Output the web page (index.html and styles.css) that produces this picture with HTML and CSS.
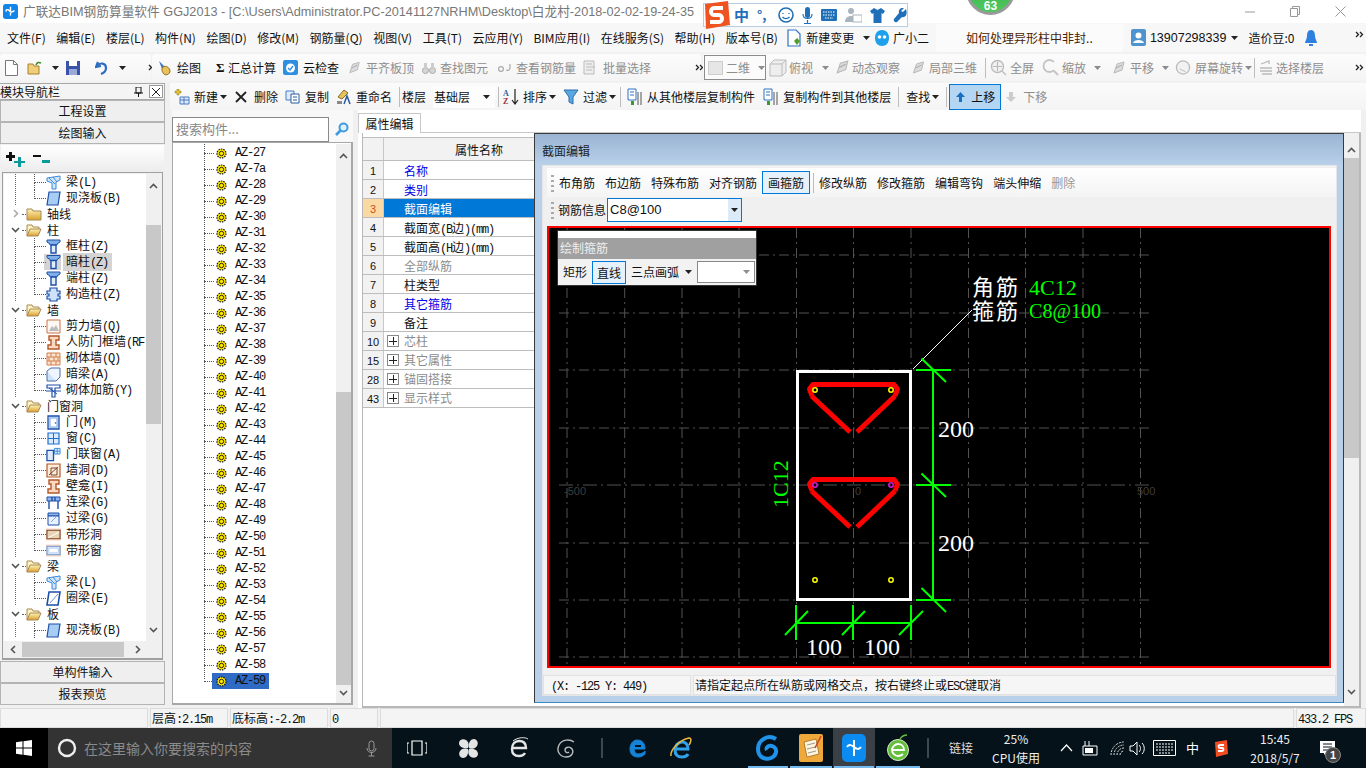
FILE: index.html
```html
<!DOCTYPE html>
<html lang="zh">
<head>
<meta charset="utf-8">
<title>广联达BIM钢筋算量软件 GGJ2013</title>
<link rel="stylesheet" href="styles.css">
</head>
<body>
<svg class="defs" width="0" height="0" aria-hidden="true">
  <defs>
    <linearGradient id="fo" x1="0" y1="0" x2="0" y2="1"><stop offset="0" stop-color="#fff2b8"/><stop offset="1" stop-color="#d9a02c"/></linearGradient>
    <symbol id="folder" viewBox="0 0 16 14"><path d="M1 2h5l1 2h8v9H1z" fill="url(#fo)" stroke="#a58a55"/></symbol>
    <symbol id="folderopen" viewBox="0 0 16 14"><path d="M1 13V2h5l1 2h6v2" fill="#fff3c4" stroke="#a58a55"/><path d="M1 13l3-7h11l-3 7z" fill="url(#fo)" stroke="#a58a55"/></symbol>
    <symbol id="col" viewBox="0 0 15 15"><path d="M1 1h13v2l-3 2v1H4V5L1 3z" fill="#7fb0ea" stroke="#1e4fa8"/><path d="M5 6h5v8H5z" fill="#dfeeff" stroke="#1e4fa8" stroke-width="1.4"/></symbol>
    <symbol id="cons" viewBox="0 0 15 15"><path d="M4 1h7v3h3v3h-2v2h2v3h-3v2H4v-2H1V9h2V7H1V4h3z" fill="#cfe2fb" stroke="#1e4fa8" stroke-width="1.2"/></symbol>
    <symbol id="beam" viewBox="0 0 15 15"><path d="M1 3l13-2v4l-4 2v7H6V8L1 6z" fill="#cfe6fb" stroke="#3c87d8"/><path d="M3 3l6 6M7 2l4 5" stroke="#3c87d8"/></symbol>
    <symbol id="slab" viewBox="0 0 15 15"><path d="M3 1h11l-2 13H1z" fill="#a8cdf5" stroke="#1c4fa8" stroke-width="1.2"/></symbol>
    <symbol id="ring" viewBox="0 0 15 15"><path d="M3 1h11l-2 13H1z" fill="#fff" stroke="#1c4fa8" stroke-width="1.6"/><path d="M4 12L12 3" stroke="#5d95dd"/></symbol>
    <symbol id="shear" viewBox="0 0 15 15"><path d="M1 1h13v13H1z" fill="#fff8f2" stroke="#c8744a"/><path d="M3 12l3-5 2 2 2-3 3 6z" fill="#bbb"/></symbol>
    <symbol id="civil" viewBox="0 0 15 15"><path d="M3 1h10v4h-3v5h3v4H2v-4h3V5H3z" fill="#fbd9c0" stroke="#b4592a" stroke-width="1.4"/></symbol>
    <symbol id="brick" viewBox="0 0 15 15"><path d="M1 2h13v12H1z" fill="#fbe3cd" stroke="#d08050"/><path d="M1 6h13M1 10h13M5 2v4M10 2v4M3 6v4M8 6v4M12 6v4M5 10v4M10 10v4" stroke="#d08050"/></symbol>
    <symbol id="abeam" viewBox="0 0 15 15"><path d="M1 4h9v10H1z" fill="#cfe3fa" stroke="#466fa8"/><path d="M1 4l4-3h9v9l-4 4" fill="#eef5ff" stroke="#466fa8"/></symbol>
    <symbol id="rein" viewBox="0 0 15 15"><path d="M1 2h13v3H9v9H6V5H1z" fill="#fff" stroke="#1e4fa8" stroke-width="1.2"/><path d="M0 8h15M3 5l8 6" stroke="#1e4fa8"/></symbol>
    <symbol id="door" viewBox="0 0 15 15"><path d="M2 1h11v13H2z" fill="#cfe1fb" stroke="#1e4fa8" stroke-width="1.3"/><path d="M4 3h7v9H4z" fill="#fff" stroke="#7fa8df"/><circle cx="9.500" cy="8" r=".8" fill="#1e4fa8"/></symbol>
    <symbol id="win" viewBox="0 0 15 15"><path d="M2 2h11v11H2z" fill="#dcecff" stroke="#1e6fd0" stroke-width="1.2"/><path d="M7.500 2v11M2 7.500h11" stroke="#1e6fd0"/></symbol>
    <symbol id="doorwin" viewBox="0 0 16 15"><path d="M1 3h7v11H1z" fill="#dfeafc" stroke="#1e4fa8" stroke-width="1.4"/><path d="M9 1h6v6H9z" fill="#dcecff" stroke="#3c87d8"/><path d="M12 1v6M9 4h6" stroke="#3c87d8"/></symbol>
    <symbol id="hole" viewBox="0 0 15 15"><path d="M1 1h13v13H1z" fill="#fdecdc" stroke="#b4592a" stroke-width="1.2"/><path d="M3 12L12 4M5 5h6v7H5z" stroke="#7a4424" fill="none"/></symbol>
    <symbol id="lbeam" viewBox="0 0 15 15"><path d="M1 2h13v4H1z" fill="#8fb8ee" stroke="#1e4fa8"/><path d="M3 6v8M12 6v8M6 2v4M9 2v4" stroke="#1e4fa8" stroke-width="1.4"/></symbol>
    <symbol id="gbeam" viewBox="0 0 15 15"><path d="M2 2h11v3H2z" fill="#8fb8ee" stroke="#1e4fa8"/><path d="M2 5h11v9H2z" fill="#e8f1fd" stroke="#1e4fa8"/><path d="M5 11l5-5" stroke="#7fa8df"/></symbol>
    <symbol id="bandh" viewBox="0 0 16 15"><path d="M0 1h16v13H0z" fill="#fcdccb"/><path d="M1 3h14v9H1z" fill="#e9d2b6" stroke="#7a4424" stroke-width="1.2"/><path d="M2 11L14 5" stroke="#fff"/></symbol>
    <symbol id="bandw" viewBox="0 0 16 15"><path d="M0 1h16v13H0z" fill="#fcdccb"/><path d="M1 3h14v9H1z" fill="#dceafc" stroke="#6f94d0" stroke-width="1.2"/><path d="M3 5h10v5H3z" fill="#fff" stroke="#b7cdee"/></symbol>
    <symbol id="gem" viewBox="0 0 11 11"><circle cx="5.500" cy="5.500" r="4.500" fill="#ffe800" stroke="#111" stroke-width="1.200" stroke-dasharray="1.500 1"/><circle cx="5.500" cy="5.500" r="2.200" fill="#ffe800" stroke="#111" stroke-width=".9"/></symbol>
    <symbol id="up" viewBox="0 0 9 6"><path d="M1 5l3.500-3.500L8 5" fill="none" stroke="#555" stroke-width="1.600"/></symbol>
    <symbol id="down" viewBox="0 0 9 6"><path d="M1 1l3.500 3.500L8 1" fill="none" stroke="#555" stroke-width="1.600"/></symbol>
    <symbol id="tri" viewBox="0 0 7 4"><path d="M0 0h7L3.500 4z" fill="#222"/></symbol>
    <symbol id="more" viewBox="0 0 9 7"><path d="M1 1l2.500 2.500L1 6M5 1l2.500 2.500L5 6" fill="none" stroke="#222" stroke-width="1.300"/></symbol>
    <symbol id="gray" viewBox="0 0 16 16"><path d="M3 13l3-9 7-2-2 8z" fill="#dcdcdc" stroke="#b9b9b9"/><path d="M5 8l6-3" stroke="#aaa"/></symbol>
    <symbol id="grip" viewBox="0 0 3 18"><path d="M0 1h3v2H0zM0 6h3v2H0zM0 11h3v2H0zM0 16h3v2H0z" fill="#aaa"/></symbol>
  </defs>
</svg>

<header class="titlebar">
  <svg class="appicon" viewBox="0 0 17 17" width="15" height="15"><rect width="17" height="17" rx="3" fill="#1185e8"/><path d="M8.500 3v10M4 8.500c-2-2 2-3 3-1s4 2 6 0" fill="none" stroke="#fff" stroke-width="1.600"/></svg>
  <span class="apptitle">广联达BIM钢筋算量软件 GGJ2013 - [C:\Users\Administrator.PC-20141127NRHM\Desktop\白龙村-2018-02-02-19-24-35</span>
  <div class="winbtns">
    <svg width="10" height="10" viewBox="0 0 10 10"><path d="M0 5h10" stroke="#999"/></svg>
    <svg width="10" height="11" viewBox="0 0 10 11"><path d="M.5 2.500h7v8h-7zM2.500 2.500v-2h7v8h-2" fill="none" stroke="#999"/></svg>
    <svg width="11" height="11" viewBox="0 0 11 11"><path d="M.5.500l10 10M10.500.500l-10 10" stroke="#999"/></svg>
  </div>
</header>

<nav class="menubar">
  <span>文件(F)</span><span>编辑(E)</span><span>楼层(L)</span><span>构件(N)</span><span>绘图(D)</span><span>修改(M)</span><span>钢筋量(Q)</span><span>视图(V)</span><span>工具(T)</span><span>云应用(Y)</span><span>BIM应用(I)</span><span>在线服务(S)</span><span>帮助(H)</span><span>版本号(B)</span>
  <span class="mitem"><svg width="14" height="18" viewBox="0 0 14 18"><path d="M1 1h8l4 4v12H1z" fill="#fff" stroke="#2f72c4" stroke-width="1.200"/><path d="M7 12l3-3 3 3-3 4z" fill="#4f9e2a"/></svg>新建变更<svg class="tri" width="7" height="4"><use href="#tri"/></svg></span>
  <span class="mitem xiao"><svg width="16" height="18" viewBox="0 0 16 18"><path d="M8 1c5 0 7 4 7 8 0 5-3 8-7 8s-7-3-7-8c0-4 2-8 7-8z" fill="#1fa0ea"/><circle cx="5.500" cy="8" r="1.800" fill="#fff"/><circle cx="10.500" cy="8" r="1.800" fill="#fff"/></svg>广小二</span>
  <div class="qbox">如何处理异形柱中非封..</div>
  <div class="acct">
    <svg width="15" height="17" viewBox="0 0 15 17"><rect width="15" height="17" rx="2" fill="#4e93cf"/><circle cx="7.500" cy="6.500" r="3" fill="#fff"/><path d="M2 14c1-4 10-4 11 0z" fill="#fff"/></svg>
    <span class="phone">13907298339</span><svg class="tri" width="7" height="4"><use href="#tri"/></svg>
    <span class="beans">造价豆:0</span>
    <svg width="12" height="16" viewBox="0 0 12 16"><path d="M6 0c3 0 4 3 4 6 0 3 2 5 2 7H0c0-2 2-4 2-7 0-3 1-6 4-6z" fill="#2d7fe0"/><path d="M4 14h4v2H4z" fill="#2d7fe0"/></svg>
  </div>
  <svg class="more-r" width="9" height="7"><use href="#more"/></svg>
</nav>

<div class="toolbar">
  <div class="tpanel tp1">
    <svg width="13" height="16" viewBox="0 0 13 16"><path d="M.5.500h8l4 4v11H.5z" fill="#fff" stroke="#777"/><path d="M8.500.500v4h4" fill="none" stroke="#777"/></svg>
    <svg class="ml9" width="16" height="14" viewBox="0 0 16 14"><path d="M1 13V3h5l1 2h5v8z" fill="#f1cf7a" stroke="#a5802f"/><path d="M9 4c1-3 3-3 5-2" fill="none" stroke="#3d8a2d" stroke-width="1.500"/></svg>
    <svg class="tri ml9" width="7" height="4"><use href="#tri"/></svg>
    <svg class="ml7" width="14" height="14" viewBox="0 0 14 14"><path d="M0 0h14v14H0z" fill="#3a53a8"/><path d="M3 0h8v5H3z" fill="#fff"/><path d="M3 8h8v6H3z" fill="#9aa9d8"/></svg>
    <i class="sep ml7"></i>
    <svg class="ml8" width="13" height="15" viewBox="0 0 13 15"><path d="M3 2L1 7l5-1M2 6c3-4 9-3 9 2 0 3-2 5-5 6" fill="none" stroke="#2d6cc0" stroke-width="2.200"/></svg>
    <svg class="tri ml11" width="7" height="4"><use href="#tri"/></svg>
    <svg class="ml22" width="9" height="7"><use href="#more"/></svg>
  </div>
  <div class="tpanel tp2">
    <svg width="17" height="18" viewBox="0 0 17 18"><path d="M2 2l5 5-2 3z" fill="#3b78c8"/><path d="M6 8c3-2 7 1 7 4s-4 5-6 3-3-5-1-7z" fill="#e9c35a" stroke="#8a6a20"/></svg><span class="ml3">绘图</span>
    <b class="sigma">Σ</b><span class="ml4">汇总计算</span>
    <svg class="ml7" width="15" height="15" viewBox="0 0 15 15"><rect width="15" height="15" rx="2" fill="#2e8ee0"/><circle cx="7.500" cy="8" r="4.500" fill="#fff"/><path d="M5 8l2 2 3-4" fill="none" stroke="#2e8ee0" stroke-width="1.400"/></svg><span class="ml5">云检查</span>
    <span class="dim ml8"><svg width="15" height="16"><use href="#gray"/></svg><span class="ml4">平齐板顶</span></span>
    <span class="dim ml8"><svg width="14" height="14" viewBox="0 0 14 14"><circle cx="3.500" cy="9.500" r="3" fill="#d5d5d5" stroke="#aaa"/><circle cx="10.500" cy="9.500" r="3" fill="#d5d5d5" stroke="#aaa"/><path d="M2 2h3v6H2zM9 2h3v6H9z" fill="#ccc"/></svg><span class="ml4">查找图元</span></span>
    <span class="dim ml10"><svg width="13" height="10" viewBox="0 0 13 10"><circle cx="3" cy="6" r="2.400" fill="none" stroke="#aaa" stroke-width="1.200"/><path d="M8 7c2 1 4 0 4-2V1" fill="none" stroke="#aaa" stroke-width="1.200"/></svg><span class="ml5">查看钢筋量</span></span>
    <span class="dim ml7"><svg width="14" height="15" viewBox="0 0 14 15"><path d="M1 1h10v13H1z" fill="#eee" stroke="#bbb"/><path d="M3 4h6M3 7h9M3 10h6" stroke="#bbb"/></svg><span class="ml6">批量选择</span></span>
    <svg class="ml44" width="9" height="7"><use href="#more"/></svg>
  </div>
  <div class="tpanel tp3">
    <div class="combo2d"><svg width="15" height="14" viewBox="0 0 15 14"><path d="M.5.500h14v13H.5z" fill="#e6e6e6" stroke="#ccc"/></svg><span class="ml3">二维</span><svg class="tri tri-g ml8" width="7" height="4"><use href="#tri"/></svg></div>
    <span class="dim ml3"><svg width="18" height="18" viewBox="0 0 18 18"><path d="M1 5l4-4h12v12l-4 4H1zM1 5h12v12M13 5l4-4" fill="#eee" stroke="#bbb"/></svg><span class="ml2">俯视</span></span>
    <svg class="tri tri-g ml9" width="7" height="4"><use href="#tri"/></svg>
    <span class="dim ml4"><svg width="19" height="17"><use href="#gray"/></svg><span class="ml0">动态观察</span></span>
    <span class="dim ml10"><svg width="17" height="16"><use href="#gray"/></svg><span class="ml2">局部三维</span></span>
    <i class="sep ml8"></i>
    <span class="dim ml4"><svg width="17" height="17" viewBox="0 0 17 17"><circle cx="7.500" cy="7.500" r="6" fill="#f2f2f2" stroke="#bbb" stroke-width="1.400"/><path d="M7.500 3v9M3 7.500h9M12 12l4 4" stroke="#bbb" stroke-width="1.200"/></svg><span class="ml3">全屏</span></span>
    <span class="dim ml8"><svg width="17" height="17" viewBox="0 0 17 17"><path d="M12 3A6 6 0 1 0 12 11M12 12l4 4" fill="none" stroke="#c4c4c4" stroke-width="1.800"/></svg><span class="ml3">缩放</span></span>
    <svg class="tri tri-g ml8" width="7" height="4"><use href="#tri"/></svg>
    <span class="dim ml10"><svg width="16" height="18"><use href="#gray"/></svg><span class="ml3">平移</span></span>
    <svg class="tri tri-g ml8" width="7" height="4"><use href="#tri"/></svg>
    <span class="dim ml6"><svg width="16" height="17" viewBox="0 0 17 17"><circle cx="8.500" cy="8.500" r="7" fill="#f2f2f2" stroke="#bbb" stroke-width="1.400"/><path d="M5 10l6 3" stroke="#bbb"/></svg><span class="ml4">屏幕旋转</span></span>
    <svg class="tri tri-g ml2" width="7" height="4"><use href="#tri"/></svg>
    <i class="sep ml2"></i>
    <span class="dim ml4"><svg width="14" height="15" viewBox="0 0 14 15"><path d="M2 4l8-3v3M1 8h12M1 11h12M3 14h10" fill="none" stroke="#bbb" stroke-width="1.300"/></svg><span class="ml3">选择楼层</span></span>
    <svg class="ml31" width="9" height="7"><use href="#more"/></svg>
  </div>
</div>

<main class="work">
  <aside class="nav">
    <div class="navhead"><span>模块导航栏</span><svg class="pin" width="9" height="10" viewBox="0 0 9 10"><path d="M2 0h5v6H2zM0 6h9M4.500 6v4" fill="none" stroke="#111"/></svg><span class="navclose"><svg width="8" height="8" viewBox="0 0 8 8"><path d="M0 0l8 8M8 0L0 8" stroke="#222"/></svg></span></div>
    <div class="navbtn">工程设置</div>
    <div class="navbtn">绘图输入</div>
    <div class="treetool">
      <svg width="20" height="16" viewBox="0 0 20 16"><path d="M3 1h3v3h3v3H6v3H3V7H0V4h3z" fill="#111"/><path d="M12 6h3v4h4v2h-4v4h-3v-4H8v-2h4z" fill="#0a9a9a"/></svg>
      <svg class="ml7" width="17" height="10" viewBox="0 0 17 10"><path d="M0 1h8v2H0z" fill="#111"/><path d="M9 6h8v3H9z" fill="#0a9a9a"/></svg>
    </div>
    <div class="treebox">
      <div class="treeclip">
        <ul class="tree">
          <li class="t1 cont"><svg width="15" height="15"><use href="#beam"/></svg><span>梁<em>(L)</em></span></li>
          <li class="t1 cont last"><svg width="15" height="15"><use href="#slab"/></svg><span>现浇板<em>(B)</em></span></li>
          <li class="t0"><svg class="chev" width="6" height="9" viewBox="0 0 6 9"><path d="M1 1l3.500 3.500L1 8" fill="none" stroke="#aaa" stroke-width="1.600"/></svg><svg width="16" height="14"><use href="#folder"/></svg><span>轴线</span></li>
          <li class="t0"><svg class="chev" width="9" height="6"><use href="#down"/></svg><svg width="16" height="14"><use href="#folderopen"/></svg><span>柱</span></li>
          <li class="t1 cont"><svg width="15" height="15"><use href="#col"/></svg><span>框柱<em>(Z)</em></span></li>
          <li class="t1 cont sel"><svg width="15" height="15"><use href="#col"/></svg><span>暗柱<em>(Z)</em></span></li>
          <li class="t1 cont"><svg width="15" height="15"><use href="#col"/></svg><span>端柱<em>(Z)</em></span></li>
          <li class="t1 cont last"><svg width="15" height="15"><use href="#cons"/></svg><span>构造柱<em>(Z)</em></span></li>
          <li class="t0"><svg class="chev" width="9" height="6"><use href="#down"/></svg><svg width="16" height="14"><use href="#folderopen"/></svg><span>墙</span></li>
          <li class="t1 cont"><svg width="15" height="15"><use href="#shear"/></svg><span>剪力墙<em>(Q)</em></span></li>
          <li class="t1 cont"><svg width="15" height="15"><use href="#civil"/></svg><span>人防门框墙<em>(RF</em></span></li>
          <li class="t1 cont"><svg width="15" height="15"><use href="#brick"/></svg><span>砌体墙<em>(Q)</em></span></li>
          <li class="t1 cont"><svg width="15" height="15"><use href="#abeam"/></svg><span>暗梁<em>(A)</em></span></li>
          <li class="t1 cont last"><svg width="15" height="15"><use href="#rein"/></svg><span>砌体加筋<em>(Y)</em></span></li>
          <li class="t0"><svg class="chev" width="9" height="6"><use href="#down"/></svg><svg width="16" height="14"><use href="#folderopen"/></svg><span>门窗洞</span></li>
          <li class="t1 cont"><svg width="15" height="15"><use href="#door"/></svg><span>门<em>(M)</em></span></li>
          <li class="t1 cont"><svg width="15" height="15"><use href="#win"/></svg><span>窗<em>(C)</em></span></li>
          <li class="t1 cont"><svg width="15" height="15"><use href="#doorwin"/></svg><span>门联窗<em>(A)</em></span></li>
          <li class="t1 cont"><svg width="15" height="15"><use href="#hole"/></svg><span>墙洞<em>(D)</em></span></li>
          <li class="t1 cont"><svg width="15" height="15"><use href="#civil"/></svg><span>壁龛<em>(I)</em></span></li>
          <li class="t1 cont"><svg width="15" height="15"><use href="#lbeam"/></svg><span>连梁<em>(G)</em></span></li>
          <li class="t1 cont"><svg width="15" height="15"><use href="#gbeam"/></svg><span>过梁<em>(G)</em></span></li>
          <li class="t1 cont"><svg width="15" height="15"><use href="#bandh"/></svg><span>带形洞</span></li>
          <li class="t1 cont last"><svg width="15" height="15"><use href="#bandw"/></svg><span>带形窗</span></li>
          <li class="t0"><svg class="chev" width="9" height="6"><use href="#down"/></svg><svg width="16" height="14"><use href="#folderopen"/></svg><span>梁</span></li>
          <li class="t1 cont"><svg width="15" height="15"><use href="#beam"/></svg><span>梁<em>(L)</em></span></li>
          <li class="t1 cont last"><svg width="15" height="15"><use href="#ring"/></svg><span>圈梁<em>(E)</em></span></li>
          <li class="t0"><svg class="chev" width="9" height="6"><use href="#down"/></svg><svg width="16" height="14"><use href="#folderopen"/></svg><span>板</span></li>
          <li class="t1 cont"><svg width="15" height="15"><use href="#slab"/></svg><span>现浇板<em>(B)</em></span></li>
        </ul>
        <div class="vscroll tree-vs">
          <svg width="9" height="6"><use href="#up"/></svg>
          <div class="vtrack"><i class="thumb"></i></div>
          <svg width="9" height="6"><use href="#down"/></svg>
        </div>
      </div>
      <div class="hscroll">
        <svg width="6" height="9" viewBox="0 0 6 9"><path d="M5 1L1.500 4.500 5 8" fill="none" stroke="#555" stroke-width="1.600"/></svg>
        <i class="hthumb"></i>
        <svg width="6" height="9" viewBox="0 0 6 9"><path d="M1 1l3.500 3.500L1 8" fill="none" stroke="#555" stroke-width="1.600"/></svg>
      </div>
    </div>
    <div class="navbtn bt">单构件输入</div>
    <div class="navbtn">报表预览</div>
  </aside>

  <div class="rightcol">
    <div class="tb3">
      <svg width="16" height="16" viewBox="0 0 16 16"><path d="M3 0h2v2h2v2H5v2H3V4H1V2h2z" fill="#e8c22a" stroke="#8a7a20" stroke-width=".5"/><path d="M6 8h9v7H6z" fill="#dfeafc" stroke="#4a7cc0"/><path d="M6 11h9M10 8v7" stroke="#4a7cc0"/></svg>
      <span class="ml4">新建</span><svg class="tri ml2" width="7" height="4"><use href="#tri"/></svg>
      <svg class="ml8" width="12" height="12" viewBox="0 0 12 12"><path d="M1 1l10 10M11 1L1 11" stroke="#222" stroke-width="1.800"/></svg><span class="ml7">删除</span>
      <svg class="ml7" width="15" height="14" viewBox="0 0 15 14"><path d="M1 1h8v9H1z" fill="#dfeafc" stroke="#4a7cc0"/><path d="M6 4h8v9H6z" fill="#fff" stroke="#2a5ca0"/><path d="M8 7h4M8 10h4" stroke="#2a5ca0"/></svg><span class="ml5">复制</span>
      <svg class="ml7" width="16" height="16" viewBox="0 0 16 16"><path d="M2 8l6-7 4 3-6 6z" fill="#e8c25a" stroke="#8a6a20"/><path d="M8 15l3-8 3 8" fill="none" stroke="#2a5ca0" stroke-width="1.500"/><path d="M1 12h5v3H1z" fill="#888"/></svg><span class="ml4">重命名</span>
      <i class="sep s7"></i><span class="ml2">楼层</span>
      <div class="floorsel"><span>基础层</span><svg class="tri" width="7" height="4"><use href="#tri"/></svg></div>
      <i class="sep s3"></i>
      <svg class="ml4" width="16" height="17" viewBox="0 0 16 17"><path d="M12 1v14M9 12l3 4 3-4" fill="none" stroke="#222" stroke-width="1.200"/><text x="0" y="8" class="azt az1">A</text><text x="0" y="16" class="azt az2">Z</text></svg><span class="ml4">排序</span><svg class="tri ml2" width="7" height="4"><use href="#tri"/></svg>
      <svg class="ml7" width="16" height="16" viewBox="0 0 16 16"><path d="M1 1h14L10 8v7l-4-2V8z" fill="#5aa8e0" stroke="#2a6cb0"/></svg><span class="ml4">过滤</span><svg class="tri ml2" width="7" height="4"><use href="#tri"/></svg>
      <i class="sep ml4"></i>
      <svg class="ml6" width="15" height="18" viewBox="0 0 15 18"><path d="M1 1h8v11H1z" fill="#fff" stroke="#2f72c4"/><path d="M3 4h4M3 7h4" stroke="#2f72c4"/><path d="M4 13h3v4H4z" fill="#3a9a2a"/><path d="M11 4v13M14 4v13" stroke="#555"/></svg><span class="ml5">从其他楼层复制构件</span>
      <svg class="ml8" width="15" height="18" viewBox="0 0 15 18"><path d="M1 1h8v11H1z" fill="#fff" stroke="#2f72c4"/><path d="M3 4h4M3 7h4" stroke="#2f72c4"/><path d="M4 13h3v4H4z" fill="#3a9a2a"/><path d="M11 4v13M14 4v13" stroke="#555"/></svg><span class="ml5">复制构件到其他楼层</span>
      <i class="sep s7"></i><span class="ml7">查找</span><svg class="tri ml2" width="7" height="4"><use href="#tri"/></svg>
      <i class="sep ml7"></i>
      <div class="btn-up"><svg width="9" height="10" viewBox="0 0 9 10"><path d="M4.500 0L9 5H6v5H3V5H0z" fill="#1a6fc0"/></svg><span>上移</span></div>
      <span class="dim ml5"><svg width="10" height="10" viewBox="0 0 10 10"><path d="M3 0h4v5h3l-5 5-5-5h3z" fill="#ccc"/></svg><span class="ml7">下移</span></span>
    </div>

    <div class="panels">
      <section class="listcol">
        <div class="searchrow">
          <div class="searchbox">搜索构件...</div>
          <svg width="14" height="14" viewBox="0 0 14 14"><circle cx="8.500" cy="5.500" r="4" fill="#dff0ff" stroke="#3e9be0" stroke-width="2"/><path d="M5.500 8.500L1 13" stroke="#3e9be0" stroke-width="2.600"/></svg>
        </div>
        <div class="listbox">
          <ul class="azlist">
            <li><svg width="11" height="11"><use href="#gem"/></svg><span>AZ-27</span></li>
            <li><svg width="11" height="11"><use href="#gem"/></svg><span>AZ-7a</span></li>
            <li><svg width="11" height="11"><use href="#gem"/></svg><span>AZ-28</span></li>
            <li><svg width="11" height="11"><use href="#gem"/></svg><span>AZ-29</span></li>
            <li><svg width="11" height="11"><use href="#gem"/></svg><span>AZ-30</span></li>
            <li><svg width="11" height="11"><use href="#gem"/></svg><span>AZ-31</span></li>
            <li><svg width="11" height="11"><use href="#gem"/></svg><span>AZ-32</span></li>
            <li><svg width="11" height="11"><use href="#gem"/></svg><span>AZ-33</span></li>
            <li><svg width="11" height="11"><use href="#gem"/></svg><span>AZ-34</span></li>
            <li><svg width="11" height="11"><use href="#gem"/></svg><span>AZ-35</span></li>
            <li><svg width="11" height="11"><use href="#gem"/></svg><span>AZ-36</span></li>
            <li><svg width="11" height="11"><use href="#gem"/></svg><span>AZ-37</span></li>
            <li><svg width="11" height="11"><use href="#gem"/></svg><span>AZ-38</span></li>
            <li><svg width="11" height="11"><use href="#gem"/></svg><span>AZ-39</span></li>
            <li><svg width="11" height="11"><use href="#gem"/></svg><span>AZ-40</span></li>
            <li><svg width="11" height="11"><use href="#gem"/></svg><span>AZ-41</span></li>
            <li><svg width="11" height="11"><use href="#gem"/></svg><span>AZ-42</span></li>
            <li><svg width="11" height="11"><use href="#gem"/></svg><span>AZ-43</span></li>
            <li><svg width="11" height="11"><use href="#gem"/></svg><span>AZ-44</span></li>
            <li><svg width="11" height="11"><use href="#gem"/></svg><span>AZ-45</span></li>
            <li><svg width="11" height="11"><use href="#gem"/></svg><span>AZ-46</span></li>
            <li><svg width="11" height="11"><use href="#gem"/></svg><span>AZ-47</span></li>
            <li><svg width="11" height="11"><use href="#gem"/></svg><span>AZ-48</span></li>
            <li><svg width="11" height="11"><use href="#gem"/></svg><span>AZ-49</span></li>
            <li><svg width="11" height="11"><use href="#gem"/></svg><span>AZ-50</span></li>
            <li><svg width="11" height="11"><use href="#gem"/></svg><span>AZ-51</span></li>
            <li><svg width="11" height="11"><use href="#gem"/></svg><span>AZ-52</span></li>
            <li><svg width="11" height="11"><use href="#gem"/></svg><span>AZ-53</span></li>
            <li><svg width="11" height="11"><use href="#gem"/></svg><span>AZ-54</span></li>
            <li><svg width="11" height="11"><use href="#gem"/></svg><span>AZ-55</span></li>
            <li><svg width="11" height="11"><use href="#gem"/></svg><span>AZ-56</span></li>
            <li><svg width="11" height="11"><use href="#gem"/></svg><span>AZ-57</span></li>
            <li><svg width="11" height="11"><use href="#gem"/></svg><span>AZ-58</span></li>
            <li class="cur"><svg width="11" height="11"><use href="#gem"/></svg><span>AZ-59</span></li>
          </ul>
          <div class="vscroll list-vs">
            <svg width="9" height="6"><use href="#up"/></svg>
            <div class="vtrack"><i class="thumb"></i></div>
            <svg width="9" height="6"><use href="#down"/></svg>
          </div>
        </div>
      </section>

      <section class="propcol">
        <div class="tabstrip"><div class="tab">属性编辑</div></div>
        <div class="propbody">
          <div class="proptable">
            <div class="prow phead"><span class="pn"></span><span class="pt">属性名称</span></div>
            <div class="prow"><span class="pn">1</span><span class="pt link">名称</span></div>
            <div class="prow"><span class="pn">2</span><span class="pt link">类别</span></div>
            <div class="prow psel"><span class="pn">3</span><span class="pt">截面编辑</span></div>
            <div class="prow"><span class="pn">4</span><span class="pt">截面宽<em>(B</em>边<em>)(mm)</em></span></div>
            <div class="prow"><span class="pn">5</span><span class="pt">截面高<em>(H</em>边<em>)(mm)</em></span></div>
            <div class="prow"><span class="pn">6</span><span class="pt mute">全部纵筋</span></div>
            <div class="prow"><span class="pn">7</span><span class="pt">柱类型</span></div>
            <div class="prow"><span class="pn">8</span><span class="pt link">其它箍筋</span></div>
            <div class="prow"><span class="pn">9</span><span class="pt">备注</span></div>
            <div class="prow"><span class="pn">10</span><span class="pt mute grp"><i class="plus"></i>芯柱</span></div>
            <div class="prow"><span class="pn">15</span><span class="pt mute grp"><i class="plus"></i>其它属性</span></div>
            <div class="prow"><span class="pn">28</span><span class="pt mute grp"><i class="plus"></i>锚固搭接</span></div>
            <div class="prow"><span class="pn">43</span><span class="pt mute grp"><i class="plus"></i>显示样式</span></div>
          </div>
          <div class="vscroll prop-vs">
            <svg width="9" height="6"><use href="#up"/></svg>
            <div class="vtrack"><i class="thumb"></i></div>
            <svg width="9" height="6"><use href="#down"/></svg>
          </div>
        </div>
      </section>
    </div>
  </div>
</main>

<footer class="statusbar">
  <span class="sc c0"></span><span class="sc c1">层高<em>:2.15m</em></span><span class="sc c2">底标高<em>:-2.2m</em></span><span class="sc c3"><em>0</em></span><span class="sc c4"></span><span class="sc c5"><em>433.2 FPS</em></span>
</footer>

<div class="taskbar">
  <div class="start"><svg width="16" height="16" viewBox="0 0 16 16"><path d="M0 2.300L6.500 1.300V7.500H0zM7.500 1.200L16 0V7.500H7.500zM0 8.500H6.500V14.700L0 13.700zM7.500 8.500H16V16L7.500 14.800z" fill="#fff"/></svg></div>
  <div class="search">
    <svg width="20" height="20" viewBox="0 0 20 20"><circle cx="10" cy="10" r="8" fill="none" stroke="#eee" stroke-width="2.400"/></svg>
    <span>在这里输入你要搜索的内容</span>
    <svg class="mic" width="11" height="17" viewBox="0 0 11 17"><rect x="3" y="1" width="5" height="10" rx="2.500" fill="none" stroke="#999"/><path d="M1 8c0 6 9 6 9 0M5.500 12v4M2.500 16h6" fill="none" stroke="#999"/></svg>
  </div>
  <div class="tasks">
    <span class="ti w50"><svg width="20" height="16" viewBox="0 0 20 16"><path d="M5 1h10v14H5zM2 3H0v10h2M18 3h2v10h-2" fill="none" stroke="#fff" stroke-width="1.200"/></svg></span>
    <span class="ti w52"><svg width="21" height="21" viewBox="0 0 21 21"><path d="M10 10C4 11 1 8 1 5s4-5 7-3 3 5 2 8zM11 10c-1-6 2-9 5-9s5 4 3 7-5 3-8 2zM11 11c6-1 9 2 9 5s-4 5-7 3-3-5-2-8zM10 11c1 6-2 9-5 9s-5-4-3-7 5-3 8-2z" fill="#e4e6e6"/></svg></span>
    <span class="ti w50"><svg width="21" height="22" viewBox="0 0 21 22"><path d="M3 11h14c0-5-3-7-7-7s-7 3-7 8 3 7 7 7c3 0 5-1 6-3" fill="none" stroke="#e6e6e6" stroke-width="2.400"/><path d="M4 4c5-4 12-4 15-2" fill="none" stroke="#e6e6e6"/></svg></span>
    <span class="ti w44"><svg width="19" height="19" viewBox="0 0 19 19"><path d="M17 3C13 0 5 0 2 6s1 12 7 12 8-5 6-8-7-2-7 1 3 3 4 2" fill="none" stroke="#b8bcbc" stroke-width="1.400"/></svg></span>
    <i class="tsep"></i>
    <span class="ti w44 ml12"><svg width="19" height="21" viewBox="0 0 19 21"><path d="M2 11h15c0-6-3-9-8-9-4 0-7 4-7 9s3 8 8 8c3 0 5-1 7-3v-3c-2 2-4 3-7 3-2 0-4-2-4-5z" fill="#1583d8" stroke="#1583d8"/><path d="M7 8h6" stroke="#041016" stroke-width="2"/></svg></span>
    <span class="ti w44"><svg width="24" height="24" viewBox="0 0 24 24"><path d="M6 13h13c0-5-3-7-6-7s-7 3-7 8 3 7 7 7c3 0 5-1 6-3" fill="none" stroke="#33a0ea" stroke-width="3"/><path d="M2 20C1 14 10 4 20 2c3 0 2 4 0 7" fill="none" stroke="#e8b93c" stroke-width="1.500"/></svg></span>
    <span class="ti w42 ml44 run"><svg width="24" height="26" viewBox="0 0 24 26"><path d="M20 4C12-1 2 5 2 14s8 11 13 9 7-8 3-11-9 0-7 3" fill="none" stroke="#1f93ea" stroke-width="4"/></svg></span>
    <span class="ti w44 run"><svg width="24" height="28" viewBox="0 0 24 28"><rect width="24" height="28" rx="2" fill="#efa83a"/><path d="M5 8l12-3 3 15-12 3z" fill="#fff5dc" stroke="#a56a20" stroke-width=".8"/><path d="M8 11l8-2M8 15l8-2M9 19l8-2" stroke="#999"/><path d="M22 2l-6 12" stroke="#c8452a" stroke-width="1.500"/></svg></span>
    <span class="ti w42 active run"><svg width="24" height="28" viewBox="0 0 24 28"><rect width="24" height="28" rx="5" fill="#0b8bf0"/><path d="M12 6v16M5 13c2-3 5-2 7 0s5 3 7 0" fill="none" stroke="#fff" stroke-width="2"/></svg></span>
    <span class="ti w46 run"><svg width="22" height="28" viewBox="0 0 22 28"><circle cx="11" cy="16" r="10.500" fill="#65bd3c" stroke="#d6ecc8"/><path d="M5 16h12c0-4-3-6-6-6s-6 3-6 6 3 6 6 6c2 0 4-1 5-2" fill="none" stroke="#fff" stroke-width="1.800"/><path d="M13 5c2-3 5-4 7-4" fill="none" stroke="#65bd3c" stroke-width="1.500"/></svg></span>
  </div>
  <i class="tsep s2"></i>
  <span class="linkword">链接</span>
  <div class="cpu"><span>25%</span><span>CPU使用</span></div>
  <div class="tray">
    <svg width="13" height="8" viewBox="0 0 13 8"><path d="M1 7l5.500-6L12 7" fill="none" stroke="#fff" stroke-width="1.200"/></svg>
    <svg class="ml9" width="16" height="15" viewBox="0 0 16 15"><path d="M1 5h14v9H1z" fill="none" stroke="#fff"/><path d="M3 7h8v5H3z" fill="#fff"/><path d="M3 0v5M7 0v5" stroke="#fff"/></svg>
    <svg class="ml12" width="16" height="15" viewBox="0 0 16 15"><path d="M1 14A13 13 0 0 1 14 1M4 14A10 10 0 0 1 14 4M7 14A7 7 0 0 1 14 7M10 14A4 4 0 0 1 14 10" fill="none" stroke="#ddd" stroke-dasharray="2 1"/></svg>
    <svg class="ml3" width="16" height="15" viewBox="0 0 16 15"><path d="M1 5h3l4-4v13l-4-4H1z" fill="none" stroke="#fff"/><path d="M10 4c2 2 2 5 0 7M13 2c3 3 3 8 0 11" fill="none" stroke="#fff"/></svg>
    <svg class="ml8" width="23" height="16" viewBox="0 0 23 16"><path d="M.5.500h22v15H.5z" fill="none" stroke="#fff"/><path d="M3 4h17M3 7h17M3 10h17M6 13h11" stroke="#fff" stroke-dasharray="2 1"/></svg>
    <span class="zh">中</span>
    <svg class="ml15" width="14" height="17" viewBox="0 0 14 17"><path d="M1 2l12-2 1 14-12 3z" fill="#f14c22"/><path d="M10 5H6c-2 0-2 3 0 3h2c2 0 2 3 0 3H4" fill="none" stroke="#fff" stroke-width="1.800"/></svg>
  </div>
  <div class="clock"><span>15:45</span><span>2018/5/7</span></div>
  <div class="notif"><svg width="15" height="14" viewBox="0 0 15 14"><path d="M0 0h15v12H6l-2 2v-2H0z" fill="#fff"/><path d="M3 3h9M3 6h9M3 9h9" stroke="#041016"/></svg><b class="badge">1</b></div>
</div>

<!-- Windows and overlays that float over the application -->
<div class="sogou">
  <svg class="sg-logo" width="27" height="28" viewBox="0 0 27 28"><path d="M2 3l23-3 2 24-24 4z" fill="#ef5320"/><path d="M20 7h-9c-4 0-4 7 0 7h5c4 0 4 7 0 7H7" fill="none" stroke="#fff" stroke-width="4"/></svg>
  <span class="sg-zh">中</span>
  <span class="sg-punct">°,</span>
  <svg width="16" height="18" viewBox="0 0 16 18"><circle cx="8" cy="9" r="7" fill="none" stroke="#1f70b8" stroke-width="1.600"/><path d="M5 7v1M11 7v1M4.500 11c2 2 5 2 7 0" fill="none" stroke="#1f70b8" stroke-width="1.300"/></svg>
  <svg width="11" height="17" viewBox="0 0 11 17"><rect x="3" y="0" width="5" height="11" rx="2.500" fill="#1f70b8"/><path d="M1 7c0 6 9 6 9 0M5.500 13v3M2 16.500h7" fill="none" stroke="#1f70b8" stroke-width="1.200"/></svg>
  <svg width="16" height="12" viewBox="0 0 16 12"><rect width="16" height="12" rx="1" fill="#1f70b8"/><path d="M2 3h12M2 6h12M4 9h8" stroke="#fff" stroke-dasharray="1.500 1"/></svg>
  <svg width="17" height="17" viewBox="0 0 17 17"><circle cx="6" cy="4" r="3" fill="#a9b4be"/><path d="M0 15c0-8 12-8 12 0z" fill="#a9b4be"/><rect x="8" y="8" width="9" height="7" fill="#fff" stroke="#a9b4be"/></svg>
  <svg width="15" height="15" viewBox="0 0 15 15"><path d="M4 0l3.500 2L11 0l4 3-2 3-1.500-1v10h-8V5L2 6 0 3z" fill="#1f70b8"/></svg>
  <svg width="14" height="15" viewBox="0 0 14 15"><path d="M13 1l-3 3-2-1 3-3c-3-1-6 2-5 5L1 11c-1 2 1 4 3 3l5-5c3 1 6-2 4-8z" fill="#1f70b8"/></svg>
</div>

<div class="ball"><span>63</span></div>

<div class="dialog">
  <div class="dlgtitle">截面编辑</div>
  <div class="dlgbody">
    <div class="dlgbar">
      <svg class="gripsvg" width="3" height="18"><use href="#grip"/></svg>
      <span class="ml5">布角筋</span><span class="ml10">布边筋</span><span class="ml10">特殊布筋</span><span class="ml10">对齐钢筋</span>
      <span class="bluebtn ml5">画箍筋</span><i class="sep ml3"></i>
      <span class="ml5">修改纵筋</span><span class="ml10">修改箍筋</span><span class="ml10">编辑弯钩</span><span class="ml10">端头伸缩</span><span class="ml10 off">删除</span>
    </div>
    <div class="dlgbar2">
      <svg class="gripsvg" width="3" height="18"><use href="#grip"/></svg>
      <span class="ml4">钢筋信息</span>
      <div class="rebarcombo"><span>C8@100</span><b><svg class="tri" width="7" height="4"><use href="#tri"/></svg></b></div>
    </div>
    <div class="canvas">
      <svg class="drawing" width="780" height="438" viewBox="549 228 780 438">
        <g class="grid">
          <path d="M567 228V666M624.700 228V666M682 228V666M739 228V666M796.500 228V666M853.500 228V666M911 228V666M968.500 228V666M1025.500 228V666M1083 228V666M1140.500 228V666"/>
          <path d="M559 255H1150M559 313H1150M559 370H1150M559 428H1150M559 543H1150M559 600H1150M559 657H1150"/>
          <path class="axis" d="M559 485H1150"/>
        </g>
        <text class="gl" x="564" y="495">-500</text>
        <text class="gl" x="855" y="495">0</text>
        <text class="gl" x="1137" y="495">500</text>
        <rect class="concrete" x="797.500" y="371.500" width="113" height="228"/>
        <g class="stir">
          <path d="M812 396L809.500 389L813 384.500H894L897.500 389L895 396"/>
          <path d="M811.500 396L850 432M895 396L857 432"/>
          <path d="M812 491L809.500 484L813 479.500H894L897.500 484L895 491"/>
          <path d="M811.500 491L850 527M895 491L857 527"/>
        </g>
        <g class="bar"><circle cx="815" cy="390" r="2.200"/><circle cx="891" cy="390" r="2.200"/><circle cx="815" cy="580" r="2.200"/><circle cx="891" cy="580" r="2.200"/></g>
        <g class="bar2"><circle cx="815" cy="485" r="2.200"/><circle cx="891" cy="485" r="2.200"/></g>
        <path class="leader" d="M913 369L972 310"/>
        <g class="dim-line">
          <path d="M933 370V600M916 370H951M916 485H951M916 600H951M921.500 358.500L946 382M921.500 473.500L946 497M921.500 588L946 612"/>
          <path d="M796 623H911M796 605V640M853 605V640M911 605V640M785 635L808 611M842 635L865 611M899 635L923 611"/>
        </g>
        <text class="cjk" x="972" y="295">角筋</text>
        <text class="cjk" x="972" y="319">箍筋</text>
        <text class="gtxt" x="1029" y="295">4C12</text>
        <text class="gtxt" x="1029" y="318" textLength="72" lengthAdjust="spacingAndGlyphs">C8@100</text>
        <text class="wtxt" x="938" y="437">200</text>
        <text class="wtxt" x="938" y="551">200</text>
        <text class="wtxt" x="806" y="655">100</text>
        <text class="wtxt" x="864" y="655">100</text>
        <text class="gtxt rot">1C12</text>
      </svg>
      <div class="floatbar">
        <div class="fhead">绘制箍筋</div>
        <div class="frow">
          <span>矩形</span><span class="bluebtn">直线</span><span>三点画弧</span><svg class="tri ftri" width="7" height="4"><use href="#tri"/></svg>
          <div class="fcombo"><svg class="tri tri-g" width="7" height="4"><use href="#tri"/></svg></div>
        </div>
      </div>
    </div>
    <div class="dlgstatus">
      <span class="ds1"><em>(X: -125 Y: 449)</em></span>
      <span class="ds2">请指定起点所在纵筋或网格交点，按右键终止或<em>ESC</em>键取消</span>
    </div>
  </div>
</div>
</body>
</html>
```
FILE: styles.css
```css
* { box-sizing: border-box; }
html, body { margin: 0; padding: 0; }
body {
  position: relative;
  width: 1366px;
  height: 768px;
  overflow: hidden;
  background: #f0f0f0;
  color: #111;
  font: 12px/16px "Noto Sans CJK SC", sans-serif;
  display: flex;
  flex-direction: column;
}
ul { list-style: none; margin: 0; padding: 0; }
em { font-style: normal; font-family: "Liberation Mono", monospace; font-size: 12px; letter-spacing: -1.2px; }
i { display: block; font-style: normal; }
svg { flex: none; display: block; }
.defs { position: absolute; }

.ml0 { margin-left: 0; } .ml1 { margin-left: 1px; } .ml2 { margin-left: 2px; } .ml3 { margin-left: 3px; }
.ml4 { margin-left: 4px; } .ml5 { margin-left: 5px; } .ml6 { margin-left: 6px; } .ml7 { margin-left: 7px; }
.ml8 { margin-left: 8px; } .ml9 { margin-left: 9px; } .ml10 { margin-left: 10px; } .ml11 { margin-left: 11px; }
.ml12 { margin-left: 12px; } .ml15 { margin-left: 15px; } .ml22 { margin-left: 22px; } .ml31 { margin-left: 31px; }
.ml42 { margin-left: 42px; } .ml44 { margin-left: 44px; }

.sep { width: 1px; height: 20px; background: #bdbdbd; }
.s7 { margin-left: 7px; } .s3 { margin-left: 3px; }
.tri { display: block; }
.tri-g { opacity: .5; }
.dim { display: flex; align-items: center; color: #8e8e8e; }

/* title */
.titlebar { height: 23px; flex: none; background: #fff; display: flex; align-items: center; padding-left: 3px; }
.apptitle { margin-left: 5px; color: #777; font-family: "Liberation Sans", "Noto Sans CJK SC", sans-serif; font-size: 12.7px; white-space: nowrap; width: 690px; }
.winbtns { margin-left: auto; display: flex; align-items: center; gap: 35px; width: 121px; }

/* menu */
.menubar { height: 29px; flex: none; background: #f7f7f7; display: flex; align-items: center; padding-left: 7px; gap: 10.5px; white-space: nowrap; position: relative; }
.mitem { display: flex; align-items: center; gap: 5px; margin-left: -1px; }
.mitem .tri { margin-left: 4px; }
.xiao { gap: 3px; margin-left: -7px; }
.qbox { width: 187px; height: 28px; margin-left: -3px; background: #fbfbfb; border-radius: 3px; color: #4a2300; text-align: center; line-height: 28px; padding-right: 1px; font-size: 12px; }
.acct { display: flex; align-items: center; margin-left: -3px; }
.acct .phone { margin-left: 4px; font-family: "Liberation Sans", sans-serif; font-size: 12.5px; }
.acct .tri { margin-left: 5px; }
.beans { margin-left: 10px; }
.acct svg:last-child { margin-left: 11px; }
.more-r { position: absolute; left: 1355px; top: 8px; }

/* toolbar */
.toolbar { height: 31px; flex: none; background: #f2f2f2; display: flex; padding-top: 2px; padding-bottom: 2px; }
.tpanel { height: 27px; display: flex; align-items: center; white-space: nowrap; background: linear-gradient(#fcfcfc, #f4f4f4); border-radius: 3px; }
.tp1 { width: 151px; padding-left: 5px; }
.tp2 { width: 549px; margin-left: 1px; padding-left: 5px; }
.tp3 { margin-left: 2px; flex: 1; padding-left: 1px; }
.sigma { margin-left: 15px; font: bold 13px "Liberation Serif", serif; width: 8px; }
.combo2d { width: 62px; height: 25px; border: 1px solid #8c8c8c; display: flex; align-items: center; padding-left: 3px; color: #8e8e8e; background: #fbfbfb; }

/* work */
.work { height: 625px; flex: none; display: flex; }
.nav { width: 165px; flex: none; display: flex; flex-direction: column; }
.navhead { height: 17px; flex: none; display: flex; align-items: center; border: 1px solid #a8a8a8; border-left: 0; background: #f4f4f4; font-size: 12px; line-height: 14px; padding-right: 1px; }
.navhead span:first-child { flex: 1; }
.pin { margin-right: 6px; }
.navclose { width: 14px; height: 13px; border: 1px solid #999; background: #fff; display: flex; align-items: center; justify-content: center; }
.navbtn { height: 22px; flex: none; background: #efefef; border: 1px solid #b4b4b4; text-align: center; line-height: 20px; font-size: 12px; }
.navbtn.bt { margin-top: 1px; }
.treetool { height: 27px; flex: none; margin: 1px 1px 0; display: flex; align-items: center; padding-left: 5px; background: linear-gradient(#fff, #ececec); }
.treebox { height: 488px; flex: none; margin: 0 2px; border: 2px solid #a0a0a0; border-width: 1px 1px 2px; background: #f0f0f0; display: flex; flex-direction: column; padding: 1px; }
.treeclip { flex: 1; min-height: 0; display: flex; overflow: hidden; }
.tree { width: 142px; height: 100%; background: #fff; overflow: hidden; flex: none; }
.tree li { height: 16px; display: flex; align-items: center; position: relative; white-space: nowrap; }
.t0 .chev { position: absolute; left: 7px; top: 5px; }
.tree .t0 .chev[width="6"] { left: 9px; top: 3px; }
.t0 svg + svg { margin-left: 22px; }
.t0 span { margin-left: 5px; }
.t0::before { content: ""; position: absolute; left: 18px; width: 4px; top: 8px; border-top: 1px dotted #666; }
.t1 { padding-left: 42px; }
.t1 span { margin-left: 4px; padding: 0 1px; }
.t1::after { content: ""; position: absolute; left: 30px; top: 0; height: 8px; width: 11px; border-left: 1px dotted #555; border-bottom: 1px dotted #555; }
.t1:not(.last)::before { content: ""; position: absolute; left: 30px; top: 8px; height: 8px; border-left: 1px dotted #555; }
.cont { background-image: repeating-linear-gradient(#666 0 1px, transparent 1px 2px); background-size: 1px 100%; background-position: 11px 0; background-repeat: no-repeat; }
.sel span { background: #d4d4d4; line-height: 16px; margin-left: 2px; padding-left: 3px; padding-right: 4px; }
.sel svg { background: #d4d4d4; box-shadow: -2px 0 0 #d4d4d4; height: 16px; }

.vscroll { width: 15px; flex: none; background: #f0f0f0; display: flex; flex-direction: column; align-items: center; }
.vscroll > svg { margin: 5px 0; }
.vtrack { flex: 1; width: 15px; min-height: 0; display: flex; flex-direction: column; overflow: hidden; }
.thumb { background: #c8c8c8; width: 15px; flex: none; }
.tree-vs { padding-top: 4px; padding-bottom: 3px; }
.tree-vs .vtrack { padding-top: 31px; }
.tree-vs .thumb { height: 199px; }
.hscroll { height: 16px; flex: none; display: flex; align-items: center; padding-left: 6px; background: #f0f0f0; }
.hthumb { width: 102px; height: 15px; background: #c8c8c8; margin-left: 6px; }
.hscroll svg:last-child { margin-left: 11px; }

.rightcol { flex: 1; min-width: 0; display: flex; flex-direction: column; }
.tb3 { height: 27px; flex: none; margin-left: 5px; display: flex; align-items: center; padding-left: 4px; white-space: nowrap; background: linear-gradient(#fbfbfb, #f4f4f4); }
.floorsel { width: 62px; height: 22px; margin-left: 7px; background: #fdfdfd; display: flex; align-items: center; padding-left: 1px; justify-content: space-between; padding-right: 5px; }
.azt { font: bold 8px "Liberation Serif", serif; }
.az1 { fill: #2a5ca0; } .az2 { fill: #a03030; }
.btn-up { width: 52px; height: 26px; margin-left: 2px; background: #b4d6f2; border: 1px solid #0078d7; display: flex; align-items: center; padding-left: 6px; gap: 6px; }

.panels { flex: 1; min-height: 0; display: flex; }
.listcol { width: 181px; flex: none; margin-left: 7px; display: flex; flex-direction: column; }
.searchrow { height: 32px; flex: none; display: flex; align-items: center; padding-top: 6px; background: #f8f8f8; }
.searchbox { width: 157px; height: 25px; border: 1px solid #8a8a8a; background: #fff; color: #888; padding-left: 3px; line-height: 21px; font-size: 13px; }
.searchrow svg { margin-left: 6px; }
.listbox { height: 563px; flex: none; border: 2px solid #a8a8a8; border-width: 1px 2px 2px 1px; background: #fff; display: flex; padding-top: 1px; }
.azlist { width: 163px; flex: none; padding-top: 1px; background-image: repeating-linear-gradient(#555 0 1px, transparent 1px 2px); background-size: 1px 536px; background-position: 31px 0; background-repeat: no-repeat; }
.azlist li { height: 16px; display: flex; align-items: center; padding-left: 43px; position: relative; }
.azlist li::before { content: ""; position: absolute; left: 31px; width: 10px; top: 8px; border-top: 1px dotted #555; }
.azlist span { margin-left: 8px; font: 12px/16px "Liberation Mono", monospace; letter-spacing: -1.2px; }
.azlist .cur { background: linear-gradient(#2f6bc4, #2f6bc4) 39px 0 / 57px 16px no-repeat; }
.list-vs { padding-top: 4px; padding-bottom: 2px; }
.list-vs .vtrack { padding-top: 228px; }
.list-vs .thumb { height: 294px; }

.propcol { flex: 1; min-width: 0; margin-left: 5px; margin-right: 5px; display: flex; flex-direction: column; background: #fff; }
.tabstrip { height: 23px; flex: none; background: #fff; padding-top: 3px; border-bottom: 1px solid #c8c8c8; }
.tab { width: 63px; height: 20px; background: #fff; border: 1px solid #c8c8c8; border-bottom: 0; text-align: center; line-height: 19px; }
.propbody { height: 575px; flex: none; margin-left: 4px; display: flex; background: #fff; border: 1px solid #b8b8b8; border-width: 0 2px 2px 1px; }
.proptable { flex: 1; min-width: 0; padding-top: 4px; }
.prow { display: flex; height: 19px; border-bottom: 1px solid #bdbdbd; }
.phead { height: 24px; border-top: 1px solid #bdbdbd; }
.pn { width: 21px; flex: none; text-align: center; background: #f2f2f2; border-right: 1px solid #c8c8c8; font: 11px/20px "Liberation Sans", sans-serif; }
.pt { flex: 1; padding-left: 20px; line-height: 20px; white-space: nowrap; }
.phead .pn { line-height: 23px; }
.phead .pt { background: #f2f2f2; padding-left: 71px; line-height: 23px; }
.link { color: #0000e8; }
.mute { color: #8c8c8c; }
.psel .pn { background: #fbd9a4; color: #c8551a; }
.psel .pt { background: #0078d7; color: #fff; }
.grp { display: flex; align-items: center; padding-left: 3px; }
.plus { width: 12px; height: 12px; border: 1px solid #888; margin-right: 5px; background: linear-gradient(#222, #222) center / 8px 1px no-repeat, linear-gradient(#222, #222) center / 1px 8px no-repeat, #fff; }
.prop-vs { padding-top: 9px; padding-bottom: 6px; }
.prop-vs .thumb { height: 300px; }

/* status */
.statusbar { height: 20px; flex: none; display: flex; background: #f0f0f0; gap: 2px; }
.sc { background: #f4f4f4; border: 1px solid #dcdcdc; line-height: 18px; padding-left: 1px; white-space: nowrap; }
.c0 { width: 148px; } .c1 { width: 78px; } .c2 { width: 98px; } .c3 { width: 48px; } .c4 { width: 914px; } .c5 { width: 70px; }

/* taskbar */
.taskbar { height: 40px; flex: none; background: #05121a; color: #fff; display: flex; align-items: center; }
.start { width: 48px; height: 40px; background: #000; display: flex; align-items: center; justify-content: center; }
.search { width: 344px; height: 40px; background: #333; display: flex; align-items: center; padding-left: 9px; color: #8a8a8a; font-size: 14px; }
.search span { margin-left: 7px; }
.mic { margin-left: auto; margin-right: 15px; }
.tasks { display: flex; align-items: center; height: 40px; }
.ti { height: 40px; display: flex; align-items: center; justify-content: center; position: relative; }
.w42 { width: 42px; } .w44 { width: 44px; } .w46 { width: 46px; } .w50 { width: 50px; } .w52 { width: 52px; }
.run::after { content: ""; position: absolute; left: 1px; right: 1px; bottom: 0; height: 2px; background: #76b9ed; }
.active { background: #3a4045; }
.tsep { width: 2px; height: 20px; background: #3d474d; margin-left: 13px; }
.tsep.s2 { margin-left: 6px; }
.linkword { margin-left: 20px; font-size: 12px; color: #ddd; }
.cpu { margin-left: 19px; width: 48px; display: flex; flex-direction: column; align-items: center; font-size: 12px; line-height: 19px; color: #eee; }
.tray { display: flex; align-items: center; margin-left: 20px; }
.zh { margin-left: 10px; font-size: 13px; }
.clock { margin-left: 19px; width: 56px; display: flex; flex-direction: column; align-items: center; font-size: 12px; line-height: 19px; color: #eee; }
.notif { margin-left: 17px; position: relative; }
.badge { position: absolute; left: 5px; top: 6px; width: 16px; height: 16px; border-radius: 50%; background: #444; border: 1px solid #888; color: #fff; font: bold 11px/14px "Liberation Sans", sans-serif; text-align: center; }

/* overlays */
.sogou { position: absolute; left: 703px; top: 3px; width: 205px; height: 24px; background: #fff; border: 1px solid #b7cde2; display: flex; align-items: center; gap: 8px; padding-left: 30px; }
.sg-logo { position: absolute; left: -1px; top: -3px; }
.sg-zh { color: #1f70b8; font-size: 15px; font-weight: 700; }
.sg-punct { color: #1f70b8; font-size: 13px; font-weight: 700; width: 14px; }
.ball { position: absolute; left: 966px; top: -34px; width: 49px; height: 49px; border-radius: 50%; background: linear-gradient(#2aa83c, #4fc860); border: 3px solid #9a9a9a; color: #fff; font: bold 12px "Liberation Sans", sans-serif; display: flex; align-items: flex-end; justify-content: center; }
.ball span { margin-bottom: -1px; }

.dialog { position: absolute; left: 534px; top: 133px; width: 810px; height: 570px; border: 1px solid #3a3a3a; border-bottom-color: #3a8ac0; background: linear-gradient(#9ab4d2 0, #b8d0ea 31px, #b8d0ea 100%); padding: 31px 6px 6px 7px; }
.dlgtitle { position: absolute; left: 7px; top: 9px; color: #222; font-size: 12px; }
.dlgbody { height: 100%; background: #f0f0f0; padding: 2px 0 0 4px; border: 1px solid #e6e6e6; display: flex; flex-direction: column; }
.dlgbar { height: 29px; flex: none; display: flex; align-items: center; padding-left: 4px; white-space: nowrap; background: linear-gradient(#fff, #f4f4f4); }
.off { color: #999; }
.bluebtn { height: 23px; padding: 0 5px; border: 1px solid #0078d7; background: #e5f1fb; line-height: 21px; }
.dlgbar2 { height: 27px; flex: none; display: flex; align-items: center; padding-left: 4px; padding-bottom: 2px; }
.rebarcombo { width: 135px; height: 24px; margin-left: 1px; background: #fff; border: 1px solid #0078d7; display: flex; align-items: center; justify-content: space-between; padding-left: 2px; font: 13px "Liberation Sans", sans-serif; }
.rebarcombo b { width: 13px; height: 22px; background: #dcebf7; display: flex; align-items: center; justify-content: center; }
.canvas { height: 442px; flex: none; margin: 2px 5px 0 0; position: relative; background: #000; border: 2px solid #f00; }
.drawing { display: block; }
.grid path { fill: none; stroke: #525252; stroke-width: 1; stroke-dasharray: 10 4 2 4; }
.grid .axis { stroke: #505050; stroke-dasharray: 14 4 2 4; }
.gl { fill: #3d3d3d; font: 11px "Liberation Sans", sans-serif; }
.concrete { fill: none; stroke: #fff; stroke-width: 3; }
.stir path { fill: none; stroke: #f00; stroke-width: 5; stroke-linejoin: round; }
.bar circle { fill: none; stroke: #ff0; stroke-width: 1.5; }
.bar2 circle { fill: none; stroke: #d020d0; stroke-width: 1.5; }
.leader { stroke: #fff; stroke-width: 1; fill: none; }
.dim-line path { fill: none; stroke: #0f0; stroke-width: 2; }
.cjk { fill: #fff; font: 22px "Noto Sans CJK SC", sans-serif; letter-spacing: 2px; }
.gtxt { fill: #0f0; font: 22px "Liberation Serif", serif; }
.wtxt { fill: #fff; font: 24px "Liberation Serif", serif; }
.rot { transform: translate(788px, 508px) rotate(-90deg); }
.floatbar { position: absolute; left: 8px; top: 2px; width: 200px; height: 56px; border: 1px solid #333; background: #fff; padding-top: 7px; }
.fhead { height: 21px; background: #a0a0a0; color: #eee; line-height: 20px; padding-left: 2px; }
.frow { height: 26px; background: #f2f2f2; display: flex; align-items: center; padding-left: 5px; gap: 5px; white-space: nowrap; }
.frow .bluebtn { padding: 0 4px; }
.ftri { margin-left: 1px; }
.fcombo { width: 58px; height: 22px; background: #fff; border: 1px solid #888; display: flex; align-items: center; justify-content: flex-end; padding-right: 4px; }
.dlgstatus { height: 20px; flex: none; margin: 7px 0 0 -4px; display: flex; gap: 2px; }
.ds1 { width: 148px; background: #f6f6f6; border: 1px solid #e2e2e2; padding-left: 7px; line-height: 18px; white-space: nowrap; }
.ds2 { flex: 1; background: #f6f6f6; border: 1px solid #e2e2e2; padding-left: 1px; line-height: 18px; white-space: nowrap; }
```
